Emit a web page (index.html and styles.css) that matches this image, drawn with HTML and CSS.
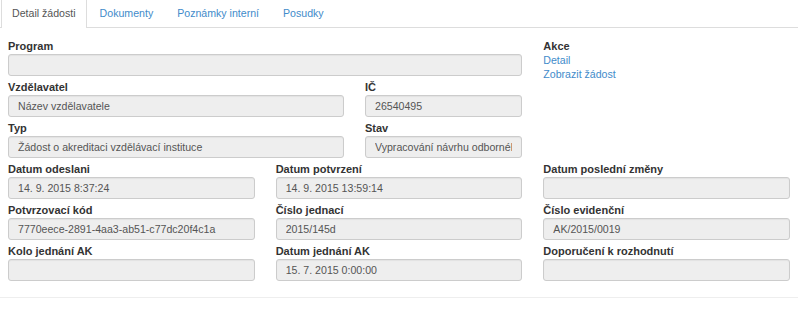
FILE: index.html
```html
<!DOCTYPE html>
<html lang="cs">
<head>
    <meta charset="UTF-8">
    <meta name="viewport" content="width=device-width, initial-scale=1.0">
    <title>Detail žádosti</title>
    <link rel="stylesheet" href="styles.css">
</head>
<body>

<div class="page">
    <!-- Tabs -->
    <ul class="tabs">
        <li class="tab active">Detail žádosti</li>
        <li class="tab"><a href="#">Dokumenty</a></li>
        <li class="tab"><a href="#">Poznámky interní</a></li>
        <li class="tab"><a href="#">Posudky</a></li>
    </ul>

    <div class="content">
        <div class="grid">
            <div class="main">
                <div class="field">
                    <label>Program</label>
                    <input class="input" type="text" value="" readonly>
                </div>
                <div class="pair">
                    <div class="field">
                        <label>Vzdělavatel</label>
                        <input class="input" type="text" value="Název vzdělavatele" readonly>
                    </div>
                    <div class="field">
                        <label>IČ</label>
                        <input class="input" type="text" value="26540495" readonly>
                    </div>
                    <div class="field">
                        <label>Typ</label>
                        <input class="input" type="text" value="Žádost o akreditaci vzdělávací instituce" readonly>
                    </div>
                    <div class="field">
                        <label>Stav</label>
                        <input class="input" type="text" value="Vypracování návrhu odborného posudku" readonly>
                    </div>
                </div>
            </div>

            <div class="actions">
                <strong>Akce</strong>
                <a href="#">Detail</a>
                <a href="#">Zobrazit žádost</a>
            </div>

            <div class="field">
                <label>Datum odeslani</label>
                <input class="input" type="text" value="14. 9. 2015 8:37:24" readonly>
            </div>
            <div class="field">
                <label>Datum potvrzení</label>
                <input class="input" type="text" value="14. 9. 2015 13:59:14" readonly>
            </div>
            <div class="field">
                <label>Datum poslední změny</label>
                <input class="input" type="text" value="" readonly>
            </div>

            <div class="field">
                <label>Potvrzovací kód</label>
                <input class="input" type="text" value="7770eece-2891-4aa3-ab51-c77dc20f4c1a" readonly>
            </div>
            <div class="field">
                <label>Číslo jednací</label>
                <input class="input" type="text" value="2015/145d" readonly>
            </div>
            <div class="field">
                <label>Číslo evidenční</label>
                <input class="input" type="text" value="AK/2015/0019" readonly>
            </div>

            <div class="field">
                <label>Kolo jednání AK</label>
                <input class="input" type="text" value="" readonly>
            </div>
            <div class="field">
                <label>Datum jednání AK</label>
                <input class="input" type="text" value="15. 7. 2015 0:00:00" readonly>
            </div>
            <div class="field">
                <label>Doporučení k rozhodnutí</label>
                <input class="input" type="text" value="" readonly>
            </div>
        </div>
    </div>

    <hr class="divider">
</div>

</body>
</html>
```

FILE: styles.css
```css
body {
    margin: 0;
    font-family: 'Liberation Sans', Arial, sans-serif;
    font-size: 11px;
    color: #333;
    background-color: #fff;
}

.page {
    width: 798px;
}

/* Tabs */
.tabs {
    display: flex;
    list-style: none;
    margin: 0;
    padding: 0 0 0 1px;
    height: 27px;
    border-bottom: 1px solid #ddd;
    font-size: 10.6px;
}

.tab {
    height: 28px;
    line-height: 27px;
    padding: 0 10px;
    margin-right: 2px;
    border: 1px solid transparent;
    border-top: none;
    border-bottom: none;
}

.tab a {
    color: #428bca;
    text-decoration: none;
}

.tab.active {
    color: #555;
    background-color: #fff;
    border-color: #ddd;
}

/* Form */
.content {
    padding: 11px 8px 0;
}

.grid {
    display: grid;
    grid-template-columns: repeat(3, 1fr);
    column-gap: 21px;
}

.main {
    grid-column: span 2;
}

.pair {
    display: grid;
    grid-template-columns: 336px 1fr;
    column-gap: 21px;
}

.field {
    margin-bottom: 4px;
}

.field label {
    display: block;
    font-weight: bold;
    line-height: 14px;
    margin-bottom: 1px;
}

.input {
    display: block;
    box-sizing: border-box;
    width: 100%;
    height: 22px;
    margin: 0;
    padding: 0 9px;
    font-family: 'Liberation Sans', Arial, sans-serif;
    font-size: 10.6px;
    color: #555;
    background-color: #eee;
    border: 1px solid #ccc;
    border-radius: 3px;
    box-shadow: inset 0 1px 1px rgba(0, 0, 0, 0.05);
    outline: none;
}

.actions {
    display: flex;
    flex-direction: column;
    align-items: flex-start;
    line-height: 14px;
}

.actions a {
    font-size: 10.6px;
    color: #428bca;
    text-decoration: none;
}

.divider {
    margin: 12px 0 0;
    border: none;
    border-top: 1px solid #eee;
}
```
